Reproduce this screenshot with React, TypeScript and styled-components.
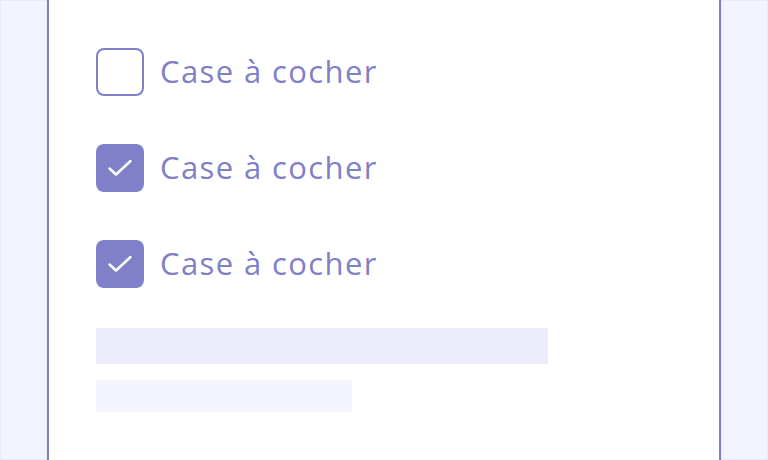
import { createGlobalStyle, styled } from 'styled-components';

const GlobalStyle = createGlobalStyle`
  html, body {
    margin: 0;
    padding: 0;
    background: #ffffff;
  }
  body {
    font-family: 'Open Sans', Lato, sans-serif;
  }
`;

const ACCENT = '#8080c8';

interface CheckItem {
  label: string;
  checked: boolean;
}

const items: CheckItem[] = [
  { label: 'Case à cocher', checked: false },
  { label: 'Case à cocher', checked: true },
  { label: 'Case à cocher', checked: true },
];

const App = () => {
  return (
    <>
      <GlobalStyle />
      <MyPage>
        <MyRail />
        <MyMain>
          <MyList>
            {items.map((item, i) => (
              <MyRow key={i}>
                <MyBox $checked={item.checked}>
                  {item.checked && (
                    <svg width="48" height="48" viewBox="0 0 48 48" fill="none">
                      <path
                        d="M13.5 24.5 L20 30.5 L34.5 17"
                        stroke="#ffffff"
                        strokeWidth="2.5"
                        strokeLinecap="round"
                        strokeLinejoin="round"
                      />
                    </svg>
                  )}
                </MyBox>
                <MyLabel>{item.label}</MyLabel>
              </MyRow>
            ))}
          </MyList>
          <MySkeletons>
            <MySkeleton $width={452} $height={36} $tone="#ececfd" />
            <MySkeleton $width={256} $height={32} $tone="#f4f4fe" />
          </MySkeletons>
        </MyMain>
        <MyRail />
      </MyPage>
    </>
  );
};

const MyPage = styled.div`
  display: flex;
  width: 768px;
  height: 460px;
  overflow: hidden;
`;

const MyRail = styled.aside`
  width: 47px;
  flex: none;
  box-sizing: border-box;
  background: #f4f4fe;
  border: 1px solid #e9e9fa;
`;

const MyMain = styled.main`
  flex: 1;
  display: flex;
  flex-direction: column;
  padding: 48px 0 0 47px;
  background: #ffffff;
  border-left: 2px solid ${ACCENT};
  border-right: 2px solid ${ACCENT};
`;

const MyList = styled.div`
  display: flex;
  flex-direction: column;
  gap: 48px;
`;

const MyRow = styled.label`
  display: flex;
  align-items: center;
  gap: 16px;
  height: 48px;
`;

const MyBox = styled.span<{ $checked: boolean }>`
  width: 48px;
  height: 48px;
  flex: none;
  box-sizing: border-box;
  border-radius: 8px;
  display: flex;
  align-items: center;
  justify-content: center;
  background: ${({ $checked }) => ($checked ? ACCENT : '#ffffff')};
  border: ${({ $checked }) => ($checked ? 'none' : `2px solid ${ACCENT}`)};
`;

const MyLabel = styled.span`
  font-size: 31px;
  letter-spacing: 1.4px;
  color: ${ACCENT};
  line-height: 1;
  margin-top: -2px;
`;

const MySkeletons = styled.div`
  display: flex;
  flex-direction: column;
  gap: 16px;
  margin-top: 40px;
`;

const MySkeleton = styled.div<{ $width: number; $height: number; $tone: string }>`
  width: ${({ $width }) => $width}px;
  height: ${({ $height }) => $height}px;
  background: ${({ $tone }) => $tone};
`;

export default App;
